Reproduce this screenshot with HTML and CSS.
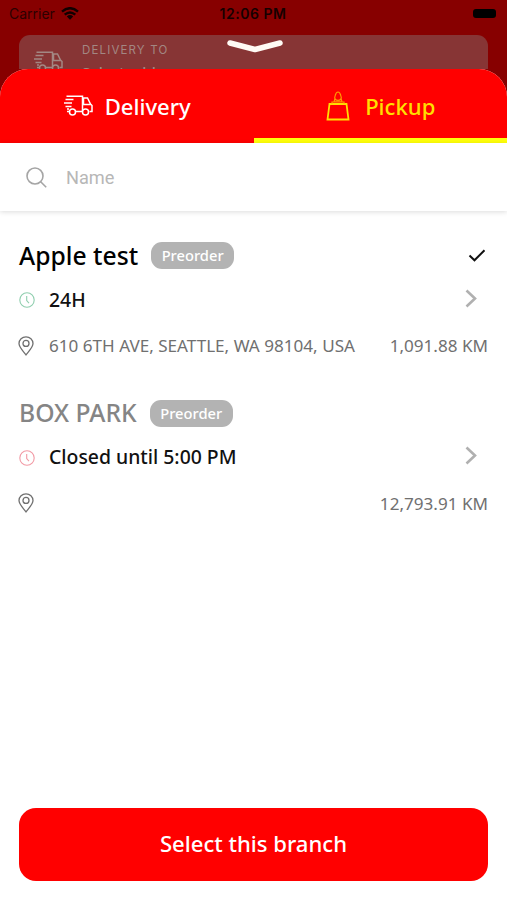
FILE: index.html
```html
<!DOCTYPE html>
<html lang="en">
<head>
<meta charset="utf-8">
<meta name="viewport" content="width=device-width, initial-scale=1">
<title>Select branch</title>
<link rel="stylesheet" href="styles.css">
</head>
<body>
<svg class="defs" aria-hidden="true">
  <symbol id="truck" viewBox="0 0 29 21">
    <path d="M2.500 1.200h16V15.800M5.500 16.500h-2.500M11.500 16.500h6.500M18.500 3h5l3 6 1.500 1.500v6h-2.500M19.500 3v6.500h7M1.500 4.500h8M0 8h8M1.500 11.500h6M3 14h2"/>
    <circle cx="8.500" cy="17" r="3"/><circle cx="21.500" cy="17" r="3"/>
  </symbol>
  <symbol id="clock" viewBox="0 0 16 16"><circle cx="8" cy="8" r="7.200"/><path d="M7.700 4v4.500l2.300 2.600"/></symbol>
  <symbol id="pin" viewBox="0 0 16 20"><path d="M8 18.800C5.500 15.500 1 11.500 1 7.600a7 6.800 0 0 1 14 0c0 3.900-4.500 7.900-7 11.200z"/><circle cx="8" cy="7.400" r="3"/></symbol>
  <symbol id="chevron" viewBox="0 0 12 19"><path d="M1.500 1.500l8.500 8-8.500 8"/></symbol>
</svg>
<div class="screen">
  <div class="status">
    <div class="carrier"><span>Carrier</span>
      <svg class="wifi" viewBox="0 0 18 13"><path d="M1 4.600Q9-2.200 17 4.600M3.700 7.600Q9 3.200 14.300 7.600"/><path class="dot" d="M5.800 9.400Q9 6.800 12.200 9.400L9 12.800z"/></svg>
    </div>
    <span class="time">12:06 PM</span>
    <span class="battery"></span>
  </div>
  <div class="address">
    <svg class="truck dim"><use href="#truck"/></svg>
    <div><div class="caption">DELIVERY TO</div><div class="value">Select address</div></div>
  </div>
  <svg class="handle" viewBox="0 0 58 16"><path d="M4 6L29 12.500l25-6.500"/></svg>
  <main class="sheet">
    <nav class="tabs">
      <div class="tab"><svg class="truck"><use href="#truck"/></svg><span>Delivery</span></div>
      <div class="tab active">
        <svg class="bag" viewBox="0 0 24 30"><path d="M3.500 13h17l2 15.500h-21z"/><path class="thin" d="M6 12.500v-1.500h12v1.500M8 11l1-3.500M16 11l-1-3.500M9.500 8.500c-1-1-1-2.500-.3-4C9.800 2.300 10.500 1 12 1s2.200 1.300 2.800 3.500c.7 1.500.7 3-.3 4-1 1.200-4 1.200-5 0zM9 10.800h6"/></svg>
        <span>Pickup</span>
      </div>
    </nav>
    <div class="search">
      <svg viewBox="0 0 21 21"><circle cx="9" cy="9" r="8"/><path d="M14.700 14.700l5.500 5.500"/></svg>
      <span>Name</span>
    </div>
    <section class="list">
      <article class="branch">
        <div class="row title"><h2 class="apple">Apple test</h2><span class="badge">Preorder</span>
          <svg class="check" viewBox="0 0 18 13"><path d="M1.500 6.500l5 4.800L16.500 1.200"/></svg></div>
        <div class="row hours"><svg class="clock open"><use href="#clock"/></svg><span class="h24">24H</span><svg class="chevron"><use href="#chevron"/></svg></div>
        <div class="row place"><svg class="pin"><use href="#pin"/></svg><span class="street">610 6TH AVE, SEATTLE, WA 98104, USA</span><span class="distance">1,091.88 KM</span></div>
      </article>
      <article class="branch">
        <div class="row title"><h2 class="box">BOX PARK</h2><span class="badge">Preorder</span></div>
        <div class="row hours"><svg class="clock closed"><use href="#clock"/></svg><span class="until">Closed until 5:00 PM</span><svg class="chevron"><use href="#chevron"/></svg></div>
        <div class="row place"><svg class="pin"><use href="#pin"/></svg><span class="distance">12,793.91 KM</span></div>
      </article>
    </section>
    <button class="select">Select this branch</button>
  </main>
</div>
</body>
</html>
```
FILE: styles.css
```css
* { box-sizing: border-box; }
body { margin: 0; font-family: "Noto Sans", sans-serif; }
svg { display: block; fill: none; stroke: currentColor; flex: none; }
.defs { position: absolute; width: 0; height: 0; }
.screen { position: relative; width: 507px; height: 900px; background: #870000; overflow: hidden; display: flex; flex-direction: column; }
.status { height: 35px; flex: none; padding: 0 10px 8px 9px; display: grid; grid-template-columns: 1fr auto 1fr; align-items: center; font: 14px/18px Inter, sans-serif; color: #160000; }
.carrier { display: flex; gap: 6px; align-items: center; color: #2c0000; }
.wifi { width: 18px; height: 13px; stroke: #100; stroke-width: 2.4; }
.wifi .dot { fill: #100; stroke: none; }
.time { font-weight: 600; font-size: 14px; letter-spacing: .5px; }
.battery { justify-self: end; width: 23px; height: 9px; margin-right: 1px; border-radius: 3px; background: #000; }
.address { height: 34px; flex: none; margin: 0 19px; padding: 7px 0 0 15px; display: flex; gap: 19px; overflow: hidden; border-radius: 11px 11px 0 0; background: #873535; color: #a38783; }
.address .truck { margin-top: 9px; }
.caption { font: 11.5px/16px Inter, sans-serif; letter-spacing: 1.15px; }
.value { font-size: 15px; line-height: 20px; margin-top: 4px; font-weight: 500; }
.handle { position: absolute; left: 226px; top: 37px; width: 58px; height: 16px; color: #fffaf4; stroke-width: 5.5; stroke-linecap: round; stroke-linejoin: round; }
.truck { width: 29px; height: 21px; stroke-width: 1.5; }
.sheet { flex: 1; display: flex; flex-direction: column; background: #fff; border-radius: 28px 28px 0 0; overflow: hidden; }
.tabs { height: 74px; flex: none; display: flex; background: #f00; }
.tab { flex: 1; display: flex; align-items: center; justify-content: center; gap: 12px; color: #fff; font-size: 22.1px; font-weight: 500; line-height: 30px; border-bottom: 5px solid transparent; padding: 4px 0 0 1px; }
.tab.active { color: #ffdf00; border-color: #ffff0a; gap: 15px; }
.bag { width: 24px; height: 30px; stroke-width: 1.8; }
.bag .thin { stroke-width: 1.2; stroke: #ff9a00; }
.search { height: 68px; flex: none; display: flex; align-items: center; gap: 19px; padding: 1px 26px 0; font: 18.2px/24px Roboto, sans-serif; color: #b7b7b7; box-shadow: 0 1px 5px rgba(0,0,0,.14); }
.search svg { width: 21px; height: 21px; stroke: #a5a5a5; stroke-width: 1.6; }
.list { flex: 1; padding: 26px 19px 0; }
.branch { height: 157.500px; }
.row { display: flex; align-items: center; }
.title { height: 37px; }
h2 { margin: 0; font-size: 24.700px; line-height: 34px; font-weight: 500; color: #000; }
h2.box { color: #858585; }
.badge { height: 27px; width: 83px; margin-left: 13px; border-radius: 11px; background: #b3b3b3; color: #fff; font-size: 14.7px; font-weight: 500; line-height: 26px; text-align: center; }
.check { width: 18px; height: 13px; margin-left: auto; margin-right: 2px; color: #111; stroke-width: 2; }
.hours { height: 52px; font-size: 19.400px; font-weight: 500; color: #111; }
.hours span { position: relative; top: -1px; }
.clock { width: 16px; height: 16px; margin-right: 14px; stroke-width: 1.1; }
.open { color: #8fceae; }
.closed { color: #f29aa5; }
.chevron { width: 12px; height: 19px; margin: 0 11px 4px auto; color: #b0b0b0; stroke-width: 2.6; }
.place { height: 39px; font-size: 17.1px; color: #707070; }
.pin { width: 16px; height: 20px; margin-right: 15px; margin-left: -1px; stroke-width: 1.3; }
.distance { margin-left: auto; }
.select { height: 73px; flex: none; margin: 0 19px 19px; padding: 0 0 4px; border: 0; border-radius: 17px; background: #f00; color: #fff; font: 500 22.1px/30px "Noto Sans", sans-serif; }
```
